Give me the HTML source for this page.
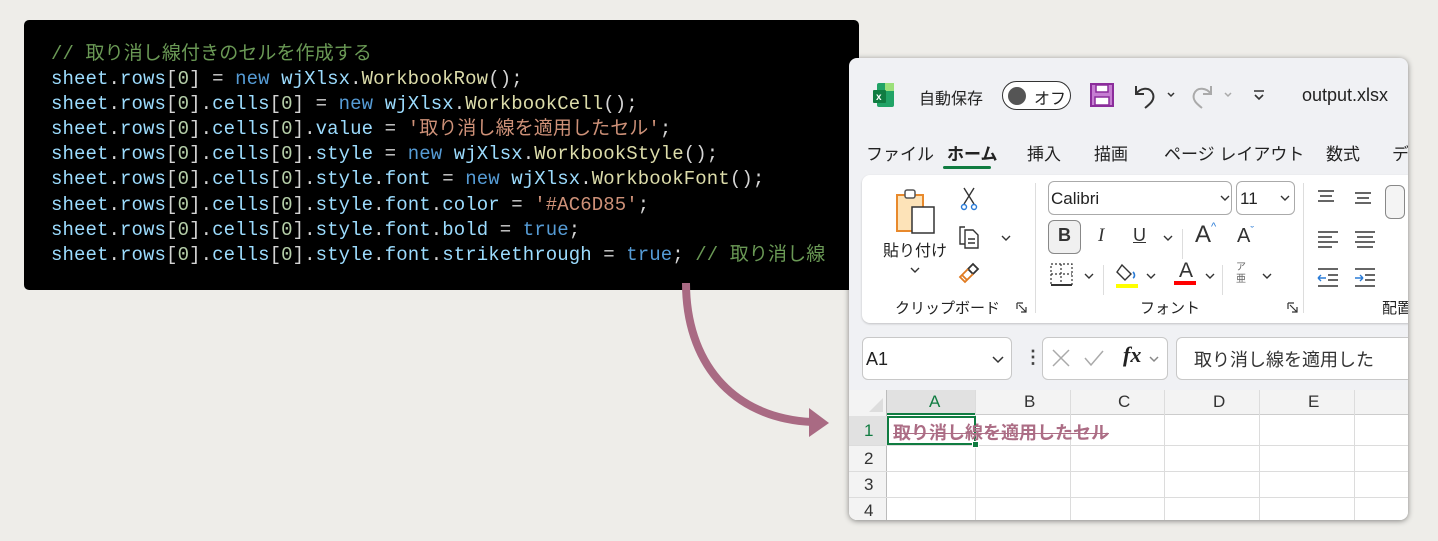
<!DOCTYPE html>
<html><head><meta charset="utf-8"><style>
*{margin:0;padding:0;box-sizing:border-box}
body{width:1438px;height:541px;background:#eeede9;position:relative;overflow:hidden;font-family:"Liberation Sans","Noto Sans CJK JP",sans-serif}
.code{position:absolute;left:24px;top:20px;width:835px;height:270px;background:#000;border-radius:5px;overflow:hidden}
.code pre{position:absolute;left:27px;top:22px;font-family:"Liberation Mono","Noto Sans CJK JP",monospace;font-size:19px;letter-spacing:0.1px;line-height:25.1px;color:#d4d4d4;font-weight:normal}
.v{color:#9cdcfe}.k{color:#569cd6}.c{color:#dcdcaa}.n{color:#b5cea8}.s{color:#ce9178}.m{color:#6a9955}
.win{position:absolute;left:849px;top:58px;width:559px;height:462px;background:#f0f1f4;border-radius:8px;box-shadow:0 1px 6px rgba(0,0,0,.45);overflow:hidden}
.a{position:absolute;white-space:nowrap}
.t{font-size:17px;color:#222}
.rib{position:absolute;left:13px;top:117px;width:560px;height:148px;background:#fff;border-radius:8px;box-shadow:0 1px 2px rgba(0,0,0,.2)}
.box{position:absolute;background:#fff;border:1px solid #c8c8c8;border-radius:6px}
.grid{position:absolute;left:0;top:332px;width:559px;height:130px;background:#fff}
.hl{position:absolute;background:#dcdcdc}
</style></head><body>
<div class="code"><pre><span class="m">// 取り消し線付きのセルを作成する</span>
<span class="v">sheet</span>.<span class="v">rows</span>[<span class="n">0</span>] = <span class="k">new</span> <span class="v">wjXlsx</span>.<span class="c">WorkbookRow</span>();
<span class="v">sheet</span>.<span class="v">rows</span>[<span class="n">0</span>].<span class="v">cells</span>[<span class="n">0</span>] = <span class="k">new</span> <span class="v">wjXlsx</span>.<span class="c">WorkbookCell</span>();
<span class="v">sheet</span>.<span class="v">rows</span>[<span class="n">0</span>].<span class="v">cells</span>[<span class="n">0</span>].<span class="v">value</span> = <span class="s">'取り消し線を適用したセル'</span>;
<span class="v">sheet</span>.<span class="v">rows</span>[<span class="n">0</span>].<span class="v">cells</span>[<span class="n">0</span>].<span class="v">style</span> = <span class="k">new</span> <span class="v">wjXlsx</span>.<span class="c">WorkbookStyle</span>();
<span class="v">sheet</span>.<span class="v">rows</span>[<span class="n">0</span>].<span class="v">cells</span>[<span class="n">0</span>].<span class="v">style</span>.<span class="v">font</span> = <span class="k">new</span> <span class="v">wjXlsx</span>.<span class="c">WorkbookFont</span>();
<span class="v">sheet</span>.<span class="v">rows</span>[<span class="n">0</span>].<span class="v">cells</span>[<span class="n">0</span>].<span class="v">style</span>.<span class="v">font</span>.<span class="v">color</span> = <span class="s">'#AC6D85'</span>;
<span class="v">sheet</span>.<span class="v">rows</span>[<span class="n">0</span>].<span class="v">cells</span>[<span class="n">0</span>].<span class="v">style</span>.<span class="v">font</span>.<span class="v">bold</span> = <span class="k">true</span>;
<span class="v">sheet</span>.<span class="v">rows</span>[<span class="n">0</span>].<span class="v">cells</span>[<span class="n">0</span>].<span class="v">style</span>.<span class="v">font</span>.<span class="v">strikethrough</span> = <span class="k">true</span>; <span class="m">// 取り消し線</span></pre></div>

<div class="win">
 <svg class="a" style="left:24px;top:25px" width="22" height="25"><rect x="4" y="0" width="17" height="24" rx="2" fill="#21a366"/><rect x="12" y="0" width="9" height="8" fill="#9be07a"/><rect x="0" y="7" width="13" height="13" rx="1" fill="#107c41"/><text x="3" y="17" font-size="10" font-weight="bold" fill="#fff" font-family="Liberation Sans">x</text></svg>
 <div class="a t" style="left:70px;top:27px;font-size:16px">自動保存</div>
 <div class="a" style="left:153px;top:23px;width:69px;height:29px;border:1.5px solid #333;border-radius:15px;background:#fff"></div>
 <div class="a" style="left:159px;top:29px;width:18px;height:18px;border-radius:50%;background:#555"></div>
 <div class="a t" style="left:185px;top:27px;font-size:16px">オフ</div>
 <svg class="a" style="left:241px;top:25px" width="24" height="24"><rect x="1" y="1" width="22" height="22" fill="#c67ed2" stroke="#8b2d9b" stroke-width="2"/><rect x="6" y="2" width="12" height="7" fill="#fff" stroke="#8b2d9b" stroke-width="1.5"/><rect x="5" y="14" width="14" height="8" fill="#fff" stroke="#8b2d9b" stroke-width="1.5"/></svg>
 <svg class="a" style="left:283px;top:25px" width="60" height="26" fill="none" stroke="#333" stroke-width="2"><path d="M4 3v8h8"/><path d="M4 11c4-6 14-8 17 0c2 6-3 10-8 14"/><path d="M36 10l3 3l3-3" stroke-width="1.5"/></svg>
 <svg class="a" style="left:340px;top:25px" width="60" height="26" fill="none" stroke="#aaa" stroke-width="2"><path d="M22 3v8h-8"/><path d="M22 11c-4-6-14-8-17 0c-2 6 3 10 8 14"/><path d="M36 10l3 3l3-3" stroke-width="1.5"/></svg>
 <svg class="a" style="left:403px;top:31px" width="14" height="12" fill="none" stroke="#333" stroke-width="1.6"><path d="M2 2h10M3 6l4 4l4-4"/></svg>
 <div class="a t" style="left:453px;top:27px;font-size:18px">output.xlsx</div>
 <div class="a t" style="left:17px;top:82px">ファイル</div>
 <div class="a t" style="left:98px;top:82px;font-weight:bold">ホーム</div>
 <div class="a" style="left:94px;top:108px;width:48px;height:3px;background:#107c41;border-radius:2px"></div>
 <div class="a t" style="left:178px;top:82px">挿入</div>
 <div class="a t" style="left:245px;top:82px">描画</div>
 <div class="a t" style="left:315px;top:82px">ページ レイアウト</div>
 <div class="a t" style="left:477px;top:82px">数式</div>
 <div class="a t" style="left:543px;top:82px">デ</div>
 <div class="rib">
  <svg class="a" style="left:33px;top:12px" width="44" height="48"><rect x="2" y="8" width="26" height="36" fill="#fde3b8" stroke="#e8892c" stroke-width="2"/><rect x="10" y="3" width="10" height="8" rx="2" fill="#fff" stroke="#555" stroke-width="1.5"/><rect x="17" y="20" width="22" height="26" fill="#fff" stroke="#333" stroke-width="1.5"/></svg>
  <div class="a" style="left:21px;top:62px;font-size:16px;color:#222">貼り付け</div>
  <svg class="a" style="left:48px;top:92px" width="10" height="7" fill="none" stroke="#333" stroke-width="1.4"><path d="M1 1l4 4l4-4"/></svg>
  <svg class="a" style="left:98px;top:12px" width="18" height="24" fill="none" stroke="#333" stroke-width="1.4"><path d="M4 1l10 16M14 1L4 17"/><circle cx="4" cy="20" r="2.5" stroke="#2a7bd6"/><circle cx="14" cy="20" r="2.5" stroke="#2a7bd6"/></svg>
  <svg class="a" style="left:95px;top:49px" width="26" height="26" fill="none" stroke="#333" stroke-width="1.4"><path d="M8 3H3v17h5"/><path d="M8 6h8l5 5v13H8z"/><path d="M11 15h7M11 19h7"/></svg>
  <svg class="a" style="left:139px;top:60px" width="10" height="7" fill="none" stroke="#333" stroke-width="1.4"><path d="M1 1l4 4l4-4"/></svg>
  <svg class="a" style="left:96px;top:86px" width="24" height="24" fill="none" stroke="#e07a20" stroke-width="1.8"><path d="M15 3l5 5l-5 5l-5-5z" stroke="#333"/><path d="M10 8l-8 8l5 5l8-8"/><path d="M4 14l5 5"/></svg>
  <div class="a" style="left:33px;top:122px;font-size:15px;color:#222">クリップボード</div>
  <svg class="a" style="left:154px;top:127px" width="12" height="12" fill="none" stroke="#333" stroke-width="1.2"><path d="M1 1h6M1 1v6M3 3l7 7M10 5v5h-5"/></svg>
  <div class="a" style="left:173px;top:8px;width:1px;height:130px;background:#ddd"></div>
  <div class="box" style="left:186px;top:6px;width:184px;height:34px;border-color:#aaa"></div>
  <div class="a" style="left:189px;top:14px;font-size:17px;color:#222">Calibri</div>
  <svg class="a" style="left:358px;top:20px" width="10" height="7" fill="none" stroke="#333" stroke-width="1.4"><path d="M1 1l4 4l4-4"/></svg>
  <div class="box" style="left:374px;top:6px;width:59px;height:34px;border-color:#aaa"></div>
  <div class="a" style="left:378px;top:14px;font-size:17px;color:#222">11</div>
  <svg class="a" style="left:418px;top:20px" width="10" height="7" fill="none" stroke="#333" stroke-width="1.4"><path d="M1 1l4 4l4-4"/></svg>
  <div class="a" style="left:186px;top:45px;width:33px;height:34px;background:#f0f0f0;border:1px solid #888;border-radius:6px"></div>
  <div class="a" style="left:196px;top:50px;font-size:18px;font-weight:bold;color:#333">B</div>
  <div class="a" style="left:236px;top:50px;font-size:19px;font-style:italic;font-family:'Liberation Serif';color:#333">I</div>
  <div class="a" style="left:271px;top:50px;font-size:18px;text-decoration:underline;color:#333">U</div>
  <svg class="a" style="left:301px;top:60px" width="10" height="7" fill="none" stroke="#333" stroke-width="1.4"><path d="M1 1l4 4l4-4"/></svg>
  <div class="a" style="left:320px;top:54px;width:1px;height:30px;background:#ddd"></div>
  <div class="a" style="left:333px;top:46px;font-size:24px;color:#333">A<span style="font-size:11px;color:#2a7bd6;vertical-align:top">^</span></div>
  <div class="a" style="left:375px;top:50px;font-size:20px;color:#333">A<span style="font-size:11px;color:#2a7bd6;vertical-align:top">ˇ</span></div>
  <svg class="a" style="left:188px;top:88px" width="24" height="24" fill="none" stroke="#333" stroke-width="1.2" stroke-dasharray="2 2"><path d="M1 1h21v21H1zM11 1v21M1 11h21"/><path d="M1 22h21" stroke-dasharray="none" stroke-width="2"/></svg>
  <svg class="a" style="left:222px;top:98px" width="10" height="7" fill="none" stroke="#333" stroke-width="1.4"><path d="M1 1l4 4l4-4"/></svg>
  <div class="a" style="left:241px;top:90px;width:1px;height:30px;background:#ddd"></div>
  <svg class="a" style="left:252px;top:85px" width="26" height="30"><path d="M8 5l9 9l-6 6l-8-8z" fill="none" stroke="#333" stroke-width="1.4"/><path d="M19 12c2 2 2 5 0 6" fill="none" stroke="#2a7bd6" stroke-width="1.6"/><rect x="2" y="24" width="22" height="4" fill="#ffff00"/></svg>
  <svg class="a" style="left:284px;top:98px" width="10" height="7" fill="none" stroke="#333" stroke-width="1.4"><path d="M1 1l4 4l4-4"/></svg>
  <div class="a" style="left:317px;top:84px;font-size:21px;color:#333">A</div>
  <div class="a" style="left:312px;top:106px;width:22px;height:4px;background:#f00"></div>
  <svg class="a" style="left:343px;top:98px" width="10" height="7" fill="none" stroke="#333" stroke-width="1.4"><path d="M1 1l4 4l4-4"/></svg>
  <div class="a" style="left:360px;top:90px;width:1px;height:30px;background:#ddd"></div>
  <div class="a" style="left:374px;top:87px;font-size:10px;color:#666;line-height:12px">ア<br>亜</div>
  <svg class="a" style="left:400px;top:98px" width="10" height="7" fill="none" stroke="#333" stroke-width="1.4"><path d="M1 1l4 4l4-4"/></svg>
  <div class="a" style="left:278px;top:122px;font-size:15px;color:#222">フォント</div>
  <svg class="a" style="left:425px;top:127px" width="12" height="12" fill="none" stroke="#333" stroke-width="1.2"><path d="M1 1h6M1 1v6M3 3l7 7M10 5v5h-5"/></svg>
  <div class="a" style="left:441px;top:8px;width:1px;height:130px;background:#ddd"></div>
  <svg class="a" style="left:452px;top:12px" width="90" height="110" stroke="#333" stroke-width="1.4"><path d="M4 4h16M6 9h12M4 14h16"/><path d="M41 6h16M43 11h12M41 16h16"/><path d="M4 45h20M4 50h14M4 55h20M4 60h14"/><path d="M41 45h20M43 50h16M41 55h20M43 60h16"/><path d="M4 82h20M14 88h10M14 93h10M4 99h20"/><path d="M41 82h20M51 88h10M51 93h10M41 99h20"/><path d="M4 91h8M4 91l3-3M4 91l3 3" stroke="#2a7bd6"/><path d="M41 91h8M49 91l-3-3M49 91l-3 3" stroke="#2a7bd6"/></svg>
  <div class="a" style="left:523px;top:10px;width:20px;height:34px;border:1px solid #888;border-radius:6px;background:#f4f4f4"></div>
  <div class="a" style="left:520px;top:122px;font-size:15px;color:#222">配置</div>
 </div>
 <div class="box" style="left:13px;top:279px;width:150px;height:43px"></div>
 <div class="a" style="left:17px;top:291px;font-size:18px;color:#222">A1</div>
 <svg class="a" style="left:143px;top:298px" width="12" height="8" fill="none" stroke="#333" stroke-width="1.5"><path d="M1 1l5 5l5-5"/></svg>
 <div class="a" style="left:175px;top:289px;font-size:18px;font-weight:bold;color:#444">⋮</div>
 <div class="box" style="left:193px;top:279px;width:126px;height:43px"></div>
 <svg class="a" style="left:202px;top:290px" width="110" height="22" fill="none" stroke="#aaa" stroke-width="1.5"><path d="M2 2l16 16M18 2L2 18"/><path d="M34 10l6 7l12-14"/><path d="M99 9l4 4l4-4" stroke="#888"/></svg>
 <div class="a" style="left:274px;top:284px;font-size:22px;font-style:italic;font-weight:bold;font-family:'Liberation Serif';color:#222">fx</div>
 <div class="box" style="left:327px;top:279px;width:250px;height:43px"></div>
 <div class="a" style="left:345px;top:288px;font-size:18px;color:#333">取り消し線を適用した</div>
 <div class="grid">
  <div class="a" style="left:0;top:0;width:559px;height:25px;background:#f3f3f3;border-bottom:1px solid #ccc"></div>
  <div class="a" style="left:0;top:0;width:38px;height:130px;background:#f3f3f3;border-right:1px solid #bbb"></div>
  <div class="a" style="left:38px;top:0;width:88px;height:25px;background:#e1e1e1;border-bottom:2px solid #107c41"></div>
  <div class="a" style="left:0;top:26px;width:38px;height:29px;background:#e1e1e1"></div>
  <svg class="a" style="left:20px;top:8px" width="15" height="15"><path d="M14 0v14H0z" fill="#ddd"/></svg>
  <div class="hl" style="left:126px;top:0;width:1px;height:130px"></div>
  <div class="hl" style="left:221px;top:0;width:1px;height:130px"></div>
  <div class="hl" style="left:315px;top:0;width:1px;height:130px"></div>
  <div class="hl" style="left:410px;top:0;width:1px;height:130px"></div>
  <div class="hl" style="left:505px;top:0;width:1px;height:130px"></div>
  <div class="hl" style="left:0;top:55px;width:559px;height:1px"></div>
  <div class="hl" style="left:0;top:81px;width:559px;height:1px"></div>
  <div class="hl" style="left:0;top:107px;width:559px;height:1px"></div>
  <div class="a" style="left:80px;top:2px;font-size:17px;color:#107c41">A</div>
  <div class="a" style="left:175px;top:2px;font-size:17px;color:#333">B</div>
  <div class="a" style="left:269px;top:2px;font-size:17px;color:#333">C</div>
  <div class="a" style="left:364px;top:2px;font-size:17px;color:#333">D</div>
  <div class="a" style="left:459px;top:2px;font-size:17px;color:#333">E</div>
  <div class="a" style="left:15px;top:31px;font-size:17px;color:#107c41">1</div>
  <div class="a" style="left:15px;top:59px;font-size:17px;color:#333">2</div>
  <div class="a" style="left:15px;top:85px;font-size:17px;color:#333">3</div>
  <div class="a" style="left:15px;top:111px;font-size:17px;color:#333">4</div>
  <div class="a" style="left:38px;top:26px;width:89px;height:29px;border:2px solid #107c41"></div>
  <div class="a" style="left:123px;top:51px;width:7px;height:7px;background:#107c41;border:1px solid #fff"></div>
  <div class="a" style="left:44px;top:29px;font-size:18px;font-weight:bold;color:#ac6d85;text-decoration:line-through">取り消し線を適用したセル</div>
 </div>
</div>

<svg style="left:0;top:0;position:absolute" width="1438" height="541"><path d="M686 283C686 360 730 418 812 422" fill="none" stroke="#a96a83" stroke-width="8"/><path d="M809 408L829 423L809 437z" fill="#a96a83"/></svg>
</body></html>
